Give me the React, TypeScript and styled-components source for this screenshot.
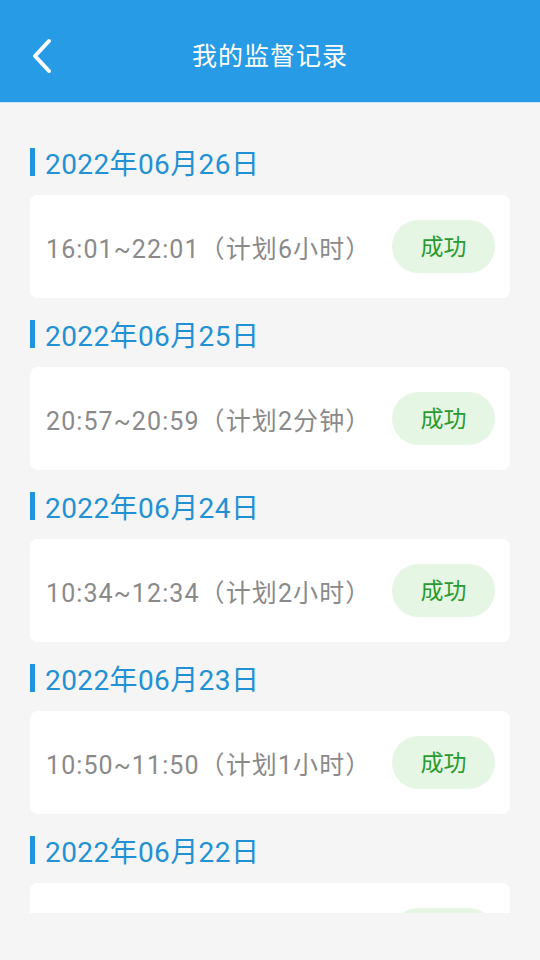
import React from 'react';
import styled, { createGlobalStyle } from 'styled-components';

const GlobalStyle = createGlobalStyle`
  html, body {
    margin: 0;
    padding: 0;
    background: #f5f5f5;
    font-family: Roboto, "Noto Sans CJK SC", sans-serif;
  }
`;

const Page = styled.div`
  width: 540px;
  height: 960px;
  background: #f5f5f5;
  overflow: hidden;
`;

const Header = styled.header`
  height: 103px;
  background: #279be5;
  display: flex;
  align-items: center;
  justify-content: center;
  position: relative;
  border-bottom: 1px solid #c9e6f8;
  box-sizing: border-box;
`;

const BackButton = styled.button`
  position: absolute;
  left: 26px;
  top: 34px;
  width: 32px;
  height: 44px;
  padding: 0;
  border: none;
  background: transparent;
  display: flex;
  align-items: center;
  justify-content: center;
`;

const Title = styled.h1`
  margin: 0;
  margin-top: 6px;
  color: #ffffff;
  font-family: "Noto Sans CJK SC", sans-serif;
  font-size: 25px;
  font-weight: 400;
  letter-spacing: 1px;
`;

const List = styled.main`
  height: 810px;
  overflow: hidden;
  padding: 39px 30px 0;
  box-sizing: border-box;
`;

const Group = styled.section`
  margin-bottom: 16px;
`;

const DateHeading = styled.h2`
  margin: 0 0 13px;
  height: 40px;
  display: flex;
  align-items: center;
  gap: 10px;
  color: #2291d4;
  font-size: 28px;
  font-weight: 400;
  letter-spacing: 0.4px;
  &::before {
    content: '';
    width: 5px;
    height: 28px;
    background: #1f93e0;
  }
`;

const Card = styled.div`
  height: 103px;
  background: #ffffff;
  border-radius: 8px;
  display: flex;
  align-items: center;
  justify-content: space-between;
  padding: 0 15px 0 16px;
  box-sizing: border-box;
`;

const TimeText = styled.span`
  color: #8a8a8a;
  font-size: 25px;
  letter-spacing: 1.1px;
`;

const StatusBadge = styled.span`
  width: 103px;
  height: 53px;
  margin-left: auto;
  padding-bottom: 4px;
  box-sizing: border-box;
  border-radius: 27px;
  background: #e5f6e4;
  color: #2a9a30;
  font-family: "Noto Sans CJK SC", sans-serif;
  font-size: 23px;
  display: flex;
  align-items: center;
  justify-content: center;
`;

type Record = { date: string; time?: string };

// the last one is scrolled past the bottom edge, only its top shows
const records: Record[] = [
  { date: '2022年06月26日', time: '16:01~22:01（计划6小时）' },
  { date: '2022年06月25日', time: '20:57~20:59（计划2分钟）' },
  { date: '2022年06月24日', time: '10:34~12:34（计划2小时）' },
  { date: '2022年06月23日', time: '10:50~11:50（计划1小时）' },
  { date: '2022年06月22日' },
];

export default function App() {
  return (
    <Page>
      <GlobalStyle />
      <Header>
        <BackButton aria-label="返回">
          <svg width="22" height="36" viewBox="0 0 22 36" fill="none">
            <path
              d="M18 3 L4 18 L18 33"
              stroke="#ffffff"
              strokeWidth="4"
              strokeLinecap="round"
              strokeLinejoin="round"
            />
          </svg>
        </BackButton>
        <Title>我的监督记录</Title>
      </Header>
      <List>
        {records.map((r) => (
          <Group key={r.date}>
            <DateHeading>{r.date}</DateHeading>
            <Card>
              {r.time && <TimeText>{r.time}</TimeText>}
              <StatusBadge>{r.time ? '成功' : null}</StatusBadge>
            </Card>
          </Group>
        ))}
      </List>
    </Page>
  );
}
